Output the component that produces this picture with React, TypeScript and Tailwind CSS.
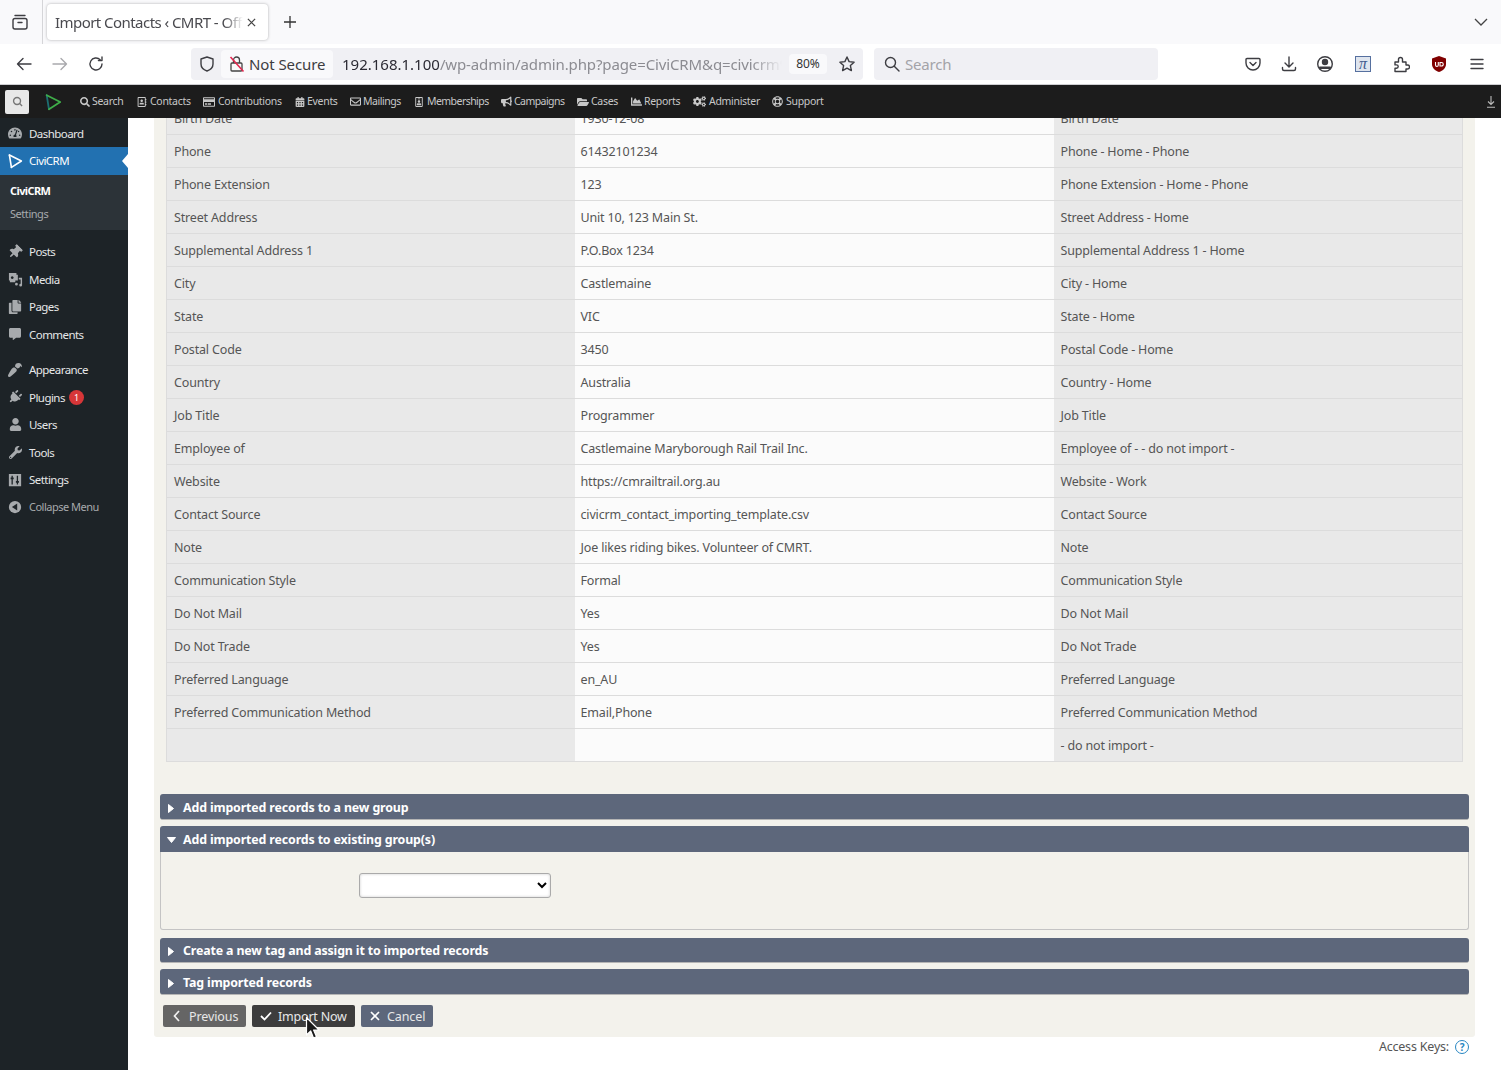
import React from "react";
import {
  FaSearch, FaRegAddressBook, FaRegCreditCard, FaCalendarAlt, FaRegEnvelope, FaRegIdBadge, FaBullhorn,
  FaFolderOpen, FaChartArea, FaCogs, FaRegLifeRing, FaTachometerAlt, FaThumbtack, FaCopy, FaCommentAlt,
  FaPaintBrush, FaPlug, FaUser, FaWrench,
} from "react-icons/fa";

const font = "font-['Noto_Sans',sans-serif]";

function Logo({ className, a, b }: { className: string; a: string; b: string }) {
  return (
    <svg viewBox="0 0 20 20" className={className} fill="none" strokeWidth="2" strokeLinejoin="round" strokeLinecap="round">
      <path d="M3 2.500L5.500 18" stroke={a} />
      <path d="M3 2.500L18 10L5.500 18" stroke={b} />
    </svg>
  );
}

function S({ children, className = "w-[18px] h-[18px]" }: { children: React.ReactNode; className?: string }) {
  return (
    <svg viewBox="0 0 18 18" className={className} fill="none" stroke="#3d3d42" strokeWidth="1.4" strokeLinecap="round" strokeLinejoin="round">
      {children}
    </svg>
  );
}

const adminItems = [
  { icon: <FaSearch className="text-[10px] mr-[2px]" />, label: "Search", w: "w-[57px] tracking-[-0.3px]" },
  { icon: <FaRegAddressBook className="text-[10px] mr-[3px]" />, label: "Contacts", w: "w-[66px] tracking-[-0.3px]" },
  { icon: <FaRegCreditCard className="text-[12px] mr-[3px]" />, label: "Contributions", w: "w-[92px] tracking-[-0.3px]" },
  { icon: <FaCalendarAlt className="text-[10px] mr-[2px]" />, label: "Events", w: "w-[55px] tracking-[-0.3px]" },
  { icon: <FaRegEnvelope className="text-[11px] mr-[2px]" />, label: "Mailings", w: "w-[64px] tracking-[-0.45px]" },
  { icon: <FaRegIdBadge className="text-[10px] mr-[3px]" />, label: "Memberships", w: "w-[87px] tracking-[-0.55px]" },
  { icon: <FaBullhorn className="text-[11px] mr-[2px]" />, label: "Campaigns", w: "w-[76px] tracking-[-0.55px]" },
  { icon: <FaFolderOpen className="text-[12px] mr-[2px]" />, label: "Cases", w: "w-[54px] tracking-[-0.3px]" },
  { icon: <FaChartArea className="text-[11px] mr-[2px]" />, label: "Reports", w: "w-[62px] tracking-[-0.3px]" },
  { icon: <FaCogs className="text-[13px] mr-[3px]" />, label: "Administer", w: "w-[79px] tracking-[-0.3px]" },
  { icon: <FaRegLifeRing className="text-[11px] mr-[3px]" />, label: "Support", w: "w-[80px] tracking-[-0.3px]" },
];

const rows = [
  ["Birth Date", "1930-12-08", "Birth Date"],
  ["Phone", "61432101234", "Phone - Home - Phone"],
  ["Phone Extension", "123", "Phone Extension - Home - Phone"],
  ["Street Address", "Unit 10, 123 Main St.", "Street Address - Home"],
  ["Supplemental Address 1", "P.O.Box 1234", "Supplemental Address 1 - Home"],
  ["City", "Castlemaine", "City - Home"],
  ["State", "VIC", "State - Home"],
  ["Postal Code", "3450", "Postal Code - Home"],
  ["Country", "Australia", "Country - Home"],
  ["Job Title", "Programmer", "Job Title"],
  ["Employee of", "Castlemaine Maryborough Rail Trail Inc.", "Employee of - - do not import -"],
  ["Website", "https://cmrailtrail.org.au", "Website - Work"],
  ["Contact Source", "civicrm_contact_importing_template.csv", "Contact Source"],
  ["Note", "Joe likes riding bikes. Volunteer of CMRT.", "Note"],
  ["Communication Style", "Formal", "Communication Style"],
  ["Do Not Mail", "Yes", "Do Not Mail"],
  ["Do Not Trade", "Yes", "Do Not Trade"],
  ["Preferred Language", "en_AU", "Preferred Language"],
  ["Preferred Communication Method", "Email,Phone", "Preferred Communication Method"],
  ["", "", "- do not import -"],
];

function TabBar() {
  return (
    <div className="h-[44px] bg-[#f9f9fb] flex items-center">
      <div className="w-[43px] h-full border-r border-[#d5d5d8] flex items-center justify-center pr-[3px]">
        <S>
          <rect x="2" y="5.500" width="14" height="10.500" rx="2" />
          <path d="M4 2.500h10M7 9.500h4" />
        </S>
      </div>
      <div className="ml-[4px] w-[221px] h-[36px] bg-white rounded-[4px] shadow-[0_0_3px_rgba(0,0,0,0.3)] flex items-center pl-[8px]">
        <span className="w-[188px] overflow-hidden whitespace-nowrap text-[15px] tracking-[-0.55px] text-[#4a4a4f] [mask-image:linear-gradient(to_right,black_90%,transparent)]">
          Import Contacts ‹ CMRT - Offline
        </span>
        <svg viewBox="0 0 10 10" className="ml-[4px] w-[9px] h-[9px]" stroke="#444" strokeWidth="1.400"><path d="M1 1l8 8M9 1l-8 8" /></svg>
      </div>
      <svg viewBox="0 0 14 14" className="ml-[15px] w-[14px] h-[14px]" stroke="#333" strokeWidth="1.3"><path d="M7 1v12M1 7h12" /></svg>
      <div className="flex-1" />
      <svg viewBox="0 0 14 8" className="mr-[13px] w-[14px] h-[8px]" fill="none" stroke="#444" strokeWidth="1.3"><path d="M1 1l6 6 6-6" /></svg>
    </div>
  );
}

function NavBar() {
  return (
    <div className="h-[41px] bg-white border-b border-[#cfcfd2] flex items-start pt-[4px]">
      <div className="w-[191px] h-[32px] flex items-center pl-[15px] gap-[18px]">
        <S><path d="M16 9H2.500M8 3.500L2.500 9 8 14.500" /></S>
        <S><path d="M2 9h13.500M10 3.500L15.500 9 10 14.500" stroke="#a9a9ad" /></S>
        <S><path d="M15 9a6 6 0 1 1-1.800-4.300M15 2v3.600h-3.600" /></S>
      </div>
      <div className="w-[672px] h-[32px] bg-[#f0f0f4] rounded-[4px] flex items-center">
        <div className="w-[30px] flex justify-center pl-[1px]">
          <S><path d="M9 2l6 2v5c0 3.500-2.500 5.800-6 7-3.500-1.200-6-3.500-6-7V4z" /></S>
        </div>
        <div className="w-[112px] h-[28px] bg-[#f9f9fb] rounded-[4px] flex items-center pl-[8px] gap-[4px]">
          <svg viewBox="0 0 16 18" className="w-[16px] h-[18px]" fill="none" stroke="#444" strokeWidth="1.3">
            <rect x="2" y="8" width="11" height="8" rx="1" />
            <path d="M4.500 8V5a3 3 0 0 1 6 0v3" />
            <path d="M1.500 2L14.500 16.500" stroke="#e22850" strokeWidth="1.6" />
          </svg>
          <span className="text-[15px] tracking-[-0.1px] text-[#3d3d42]">Not Secure</span>
        </div>
        <div className="ml-[9px] w-[440px] overflow-hidden whitespace-nowrap text-[15px] [mask-image:linear-gradient(to_right,black_93%,transparent)]">
          <span className="text-[#2b2a33]">192.168.1.100</span>
          <span className="text-[#8c8c92] tracking-[-0.12px]">/wp-admin/admin.php?page=CiviCRM&amp;q=civicrm%2Fimport</span>
        </div>
        <div className="ml-[7px] w-[38px] h-[20px] bg-[#f9f9fb] rounded-[4px] flex items-center justify-center text-[12px] text-[#333]">80%</div>
        <div className="ml-[11px]">
          <S><path d="M9 2l2.100 4.600 5 .6-3.700 3.400 1 5L9 13.100 4.600 15.600l1-5L1.900 7.200l5-.6z" /></S>
        </div>
      </div>
      <div className="ml-[11px] w-[284px] h-[32px] bg-[#f0f0f4] rounded-[4px] flex items-center pl-[9px] gap-[4px]">
        <S><circle cx="7.500" cy="7.500" r="5" /><path d="M11.500 11.500l4.500 4.500" /></S>
        <span className="text-[15px] text-[#a3a3a8] tracking-[-0.2px]">Search</span>
      </div>
      <div className="ml-[86px] h-[32px] flex items-center">
        <S><path d="M3 3.500h12c.6 0 1 .4 1 1V8c0 4-3.200 7-7 7s-7-3-7-7V4.500c0-.6.4-1 1-1zM6 7.500l3 3 3-3" /></S>
        <div className="ml-[18px]">
          <S><path d="M9 2v9.500M5 8l4 4 4-4M2.500 12.500V14c0 .8.5 1.500 1.500 1.500h10c1 0 1.500-.7 1.500-1.500v-1.500" /></S>
        </div>
        <div className="ml-[18px]">
          <S>
            <circle cx="9" cy="9" r="7.300" />
            <circle cx="9" cy="7" r="2.500" fill="#3d3d42" />
            <path d="M4 12.800h10" strokeWidth="2.600" />
          </S>
        </div>
        <div className="ml-[21px] w-[16px] h-[16px] bg-[#dfe5ee] border border-[#56709f] flex items-center justify-center font-['Liberation_Serif',serif] italic text-[16px] leading-none text-[#3f5c8e]">π</div>
        <div className="ml-[21px]">
          <S><path d="M3 7h3.500V4.500a2 2 0 0 1 4 0V7H14v3h1.500a2 2 0 0 1 0 4H14v2.500H3v-3.200h1.500a1.700 1.700 0 0 0 0-3.400H3z" /></S>
        </div>
        <div className="ml-[20px]">
          <svg viewBox="0 0 18 18" className="w-[18px] h-[18px]">
            <path d="M9 1l7 2.500V9c0 4-3 6.800-7 8-4-1.200-7-4-7-8V3.500z" fill="#800000" />
            <path d="M5.500 7v3a1.400 1.400 0 0 0 2.800 0V7M10 7.500h1.500a1.400 1.400 0 0 1 0 3.500H10z" fill="none" stroke="#fff" strokeWidth="1.100" />
          </svg>
        </div>
        <div className="ml-[20px]">
          <S><path d="M3 4.500h12M3 9h12M3 13.500h12" /></S>
        </div>
      </div>
    </div>
  );
}

function AdminBar() {
  return (
    <div className="h-[33px] shrink-0 bg-[#1c1c1c] flex items-center">
      <div className="ml-[5px] w-[24px] h-[24px] bg-[#e8e8e8] rounded-[2px] flex items-center justify-center">
        <svg viewBox="0 0 12 12" className="w-[11px] h-[11px]" fill="none" stroke="#777" strokeWidth="1.500"><circle cx="5.500" cy="5.500" r="3.800" /><path d="M8.300 8.300L11 11" /></svg>
      </div>
      <div className="ml-[15px] w-[36px]">
        <Logo className="w-[18px] h-[18px]" a="#1d6f72" b="#3fae49" />
      </div>
      {adminItems.map((it) => (
        <div key={it.label} className={`${it.w} shrink-0 flex items-center text-[10.500px] text-[#c8c8c8]`}>
          {it.icon}
          <span>{it.label}</span>
        </div>
      ))}
      <div className="flex-1" />
      <svg viewBox="0 0 10 12" className="mr-[5px] w-[10px] h-[12px]" fill="none" stroke="#bbb" strokeWidth="1.100"><path d="M5 0v8M2 5.500L5 8.500l3-3M1 11.200h8" /></svg>
    </div>
  );
}

function SideItem({ icon, label, extra, dim }: { icon: React.ReactNode; label: string; extra?: React.ReactNode; dim?: boolean }) {
  return (
    <div className={`h-[27.5px] flex items-center ${dim ? "text-[11px] tracking-[-0.5px] text-[#a7aaad]" : "text-[11.500px] tracking-[-0.55px] text-[#e6e7e8]"}`}>
      <div className="w-[29px] flex justify-center pl-[1px] text-[14px] text-[#a7aaad]">{icon}</div>
      <span>{label}</span>
      {extra}
    </div>
  );
}

const MediaIcon = (
  <svg viewBox="0 0 16 16" className="w-[15px] h-[15px]" fill="#a7aaad">
    <path fillRule="evenodd" d="M1 1h8v2h1.500v6H7.800v2H2V9H1zM4.500 4.500a1.500 1.500 0 1 0 .01 0z" />
    <path d="M11.500 6H15v8a1.500 1.500 0 1 1-1.500-1.500V8h-2zM7.500 13a1.500 1.500 0 1 1 1.500 1.500A1.500 1.500 0 0 1 7.500 13z" />
  </svg>
);
const SettingsIcon = (
  <svg viewBox="0 0 16 16" className="w-[14px] h-[14px]" fill="#a7aaad">
    <path fillRule="evenodd" d="M1 1h14v14H1zM4 3v2H3v2h1v6h1.500V7h1V5h-1V3zM10 3v6H9v2h1v2h1.500v-2h1V9h-1V3z" />
  </svg>
);
const CollapseIcon = (
  <svg viewBox="0 0 16 16" className="w-[14px] h-[14px]">
    <circle cx="8" cy="8" r="7" fill="#a7aaad" />
    <path d="M10.500 4v8L4.500 8z" fill="#1d2327" />
  </svg>
);

function Sidebar() {
  return (
    <div className="w-[128px] shrink-0 bg-[#1d2327]">
      <div className="mt-[1.5px]">
        <SideItem icon={<FaTachometerAlt />} label="Dashboard" />
      </div>
      <div className="relative h-[28px] bg-[#2271b1] flex items-center text-[11.500px] tracking-[-0.55px] text-white">
        <div className="w-[29px] flex justify-center pl-[1px]">
          <Logo className="w-[16px] h-[16px]" a="#ffffff" b="#ffffff" />
        </div>
        <span>CiviCRM</span>
        <div className="absolute right-0 top-[7px] w-0 h-0 border-y-[7px] border-y-transparent border-r-[6px] border-r-white" />
      </div>
      <div className="h-[55px] bg-[#2c3338] pl-[10px] pt-[4px]">
        <div className="h-[24px] flex items-center font-bold text-white text-[11px] tracking-[-0.6px]">CiviCRM</div>
        <div className="h-[23px] flex items-center text-[#a7aaad] text-[11px] tracking-[-0.45px]">Settings</div>
      </div>
      <div className="mt-[8px]">
        <SideItem icon={<FaThumbtack className="rotate-45" />} label="Posts" />
        <SideItem icon={MediaIcon} label="Media" />
        <SideItem icon={<FaCopy />} label="Pages" />
        <SideItem icon={<FaCommentAlt className="text-[12px]" />} label="Comments" />
      </div>
      <div className="mt-[8px]">
        <SideItem icon={<FaPaintBrush className="rotate-180" />} label="Appearance" />
        <SideItem
          icon={<FaPlug className="rotate-45" />}
          label="Plugins"
          extra={<span className="ml-[4px] w-[15px] h-[15px] rounded-full bg-[#d63638] text-white text-[9px] flex items-center justify-center">1</span>}
        />
        <SideItem icon={<FaUser className="text-[13px]" />} label="Users" />
        <SideItem icon={<FaWrench className="text-[13px]" />} label="Tools" />
        <SideItem icon={SettingsIcon} label="Settings" />
        <SideItem icon={CollapseIcon} label="Collapse Menu" dim />
      </div>
    </div>
  );
}

function Bar({ label, open, h }: { label: string; open?: boolean; h: string }) {
  return (
    <div className={`${h} bg-[#5d677b] ${open ? "rounded-t-[3px]" : "rounded-[3px] border-b border-[#b5b5b5]"} flex items-center pl-[8px] pt-[3px] text-white font-bold text-[12.400px] tracking-[-0.140px]`}>
      <span className="w-[15px] flex">
        {open ? (
          <svg viewBox="0 0 9 6" className="w-[9px] h-[6px] -ml-[1px] -mt-[2px]"><path d="M0.500 0.500h8L4.500 5.500z" fill="#fff" stroke="#fff" strokeLinejoin="round" /></svg>
        ) : (
          <svg viewBox="0 0 6 9" className="w-[6px] h-[9px]"><path d="M0.500 0.500v8l5-4z" fill="#fff" stroke="#fff" strokeLinejoin="round" /></svg>
        )}
      </span>
      <span>{label}</span>
    </div>
  );
}

function Main() {
  return (
    <div className="flex-1 min-w-0 overflow-hidden bg-white">
      <div className="mx-[26px] -mt-[17px] bg-[#f3f2ec] rounded-b-[3px] px-[6px] h-[936px]">
        <div className="px-[6px]">
          <table className="w-[1296px] table-fixed border-collapse border border-[#dcdcdc] text-[12.500px] tracking-[-0.16px] text-[#555]">
            <colgroup>
              <col className="w-[408px]" />
              <col className="w-[479px]" />
              <col className="w-[409px]" />
            </colgroup>
            <tbody>
              {rows.map((r, i) => (
                <tr key={i} className="h-[33px] border-b border-[#dcdcdc]">
                  <td className="bg-[#e9e9e9] pl-[7px] pt-[2px] whitespace-nowrap">{r[0]}</td>
                  <td className="bg-[#fbfbfb] pl-[6px] pt-[2px] whitespace-nowrap">{r[1]}</td>
                  <td className="bg-[#e9e9e9] pl-[7px] pt-[2px] whitespace-nowrap">{r[2]}</td>
                </tr>
              ))}
            </tbody>
          </table>
        </div>
        <div className="mt-[32px]">
          <Bar h="h-[26px]" label="Add imported records to a new group" />
          <div className="mt-[6px]">
            <Bar h="h-[26px]" open label="Add imported records to existing group(s)" />
            <div className="h-[78px] border border-t-0 border-[#c4c4c4] rounded-b-[3px] pt-[21px] pl-[198px]">
              <select className="block w-[192px] h-[25px] bg-white border border-[#aaa] rounded-[3px] shadow-[inset_0_0_3px_rgba(0,0,0,0.2)] text-[12px]" />
            </div>
          </div>
          <div className="mt-[8px]">
            <Bar h="h-[25px]" label="Create a new tag and assign it to imported records" />
          </div>
          <div className="mt-[6px]">
            <Bar h="h-[26px]" label="Tag imported records" />
          </div>
        </div>
        <div className="mt-[10px] ml-[3px] flex gap-[6px] text-[12.500px] tracking-[-0.1px] text-[#e8e8e8]">
          <div className="w-[83px] h-[22px] bg-[#656565] rounded-[2px] flex items-center pl-[10px] pt-[2px] gap-[9px]">
            <svg viewBox="0 0 7 12" className="w-[7px] h-[12px] -mt-[3px]" fill="none" stroke="#f0f0f0" strokeWidth="1.700"><path d="M6 1L1.500 6 6 11" /></svg>
            <span>Previous</span>
          </div>
          <div className="relative w-[103px] h-[22px] bg-[#3d3d3d] rounded-[2px] flex items-center pl-[8px] pt-[2px] gap-[6px]">
            <svg viewBox="0 0 12 10" className="w-[12px] h-[10px] -mt-[3px]" fill="none" stroke="#fff" strokeWidth="1.800"><path d="M1 5l3.500 3.500L11 1.500" /></svg>
            <span className="tracking-[-0.2px]">Import Now</span>
            <svg viewBox="0 0 16 26" className="absolute left-[53px] top-[11px] w-[16px] h-[26px]">
              <path d="M1.500 1.500V19l4.200-4 2.800 7 3-1.300-2.900-6.700H14z" fill="#1a1a1a" stroke="#fff" strokeWidth="1.200" strokeLinejoin="round" />
            </svg>
          </div>
          <div className="w-[72px] h-[22px] bg-[#5d677b] rounded-[2px] flex items-center pl-[9px] pt-[2px] gap-[7px]">
            <svg viewBox="0 0 10 10" className="w-[10px] h-[10px] -mt-[3px]" fill="none" stroke="#fff" strokeWidth="1.700"><path d="M1 1l8 8M9 1l-8 8" /></svg>
            <span>Cancel</span>
          </div>
        </div>
      </div>
      <div className="mr-[32px] mt-[1px] flex justify-end items-center gap-[6px] text-[12.500px] tracking-[-0.2px] text-[#555]">
        <span>Access Keys:</span>
        <span className="w-[14px] h-[14px] rounded-full border-[1.500px] border-[#2786c2] text-[#2786c2] text-[10px] font-bold flex items-center justify-center">?</span>
      </div>
    </div>
  );
}

export default function App() {
  return (
    <div className={`h-[1070px] w-[1501px] overflow-hidden flex flex-col ${font}`}>
      <TabBar />
      <NavBar />
      <AdminBar />
      <div className="flex-1 flex min-h-0">
        <Sidebar />
        <Main />
      </div>
    </div>
  );
}
